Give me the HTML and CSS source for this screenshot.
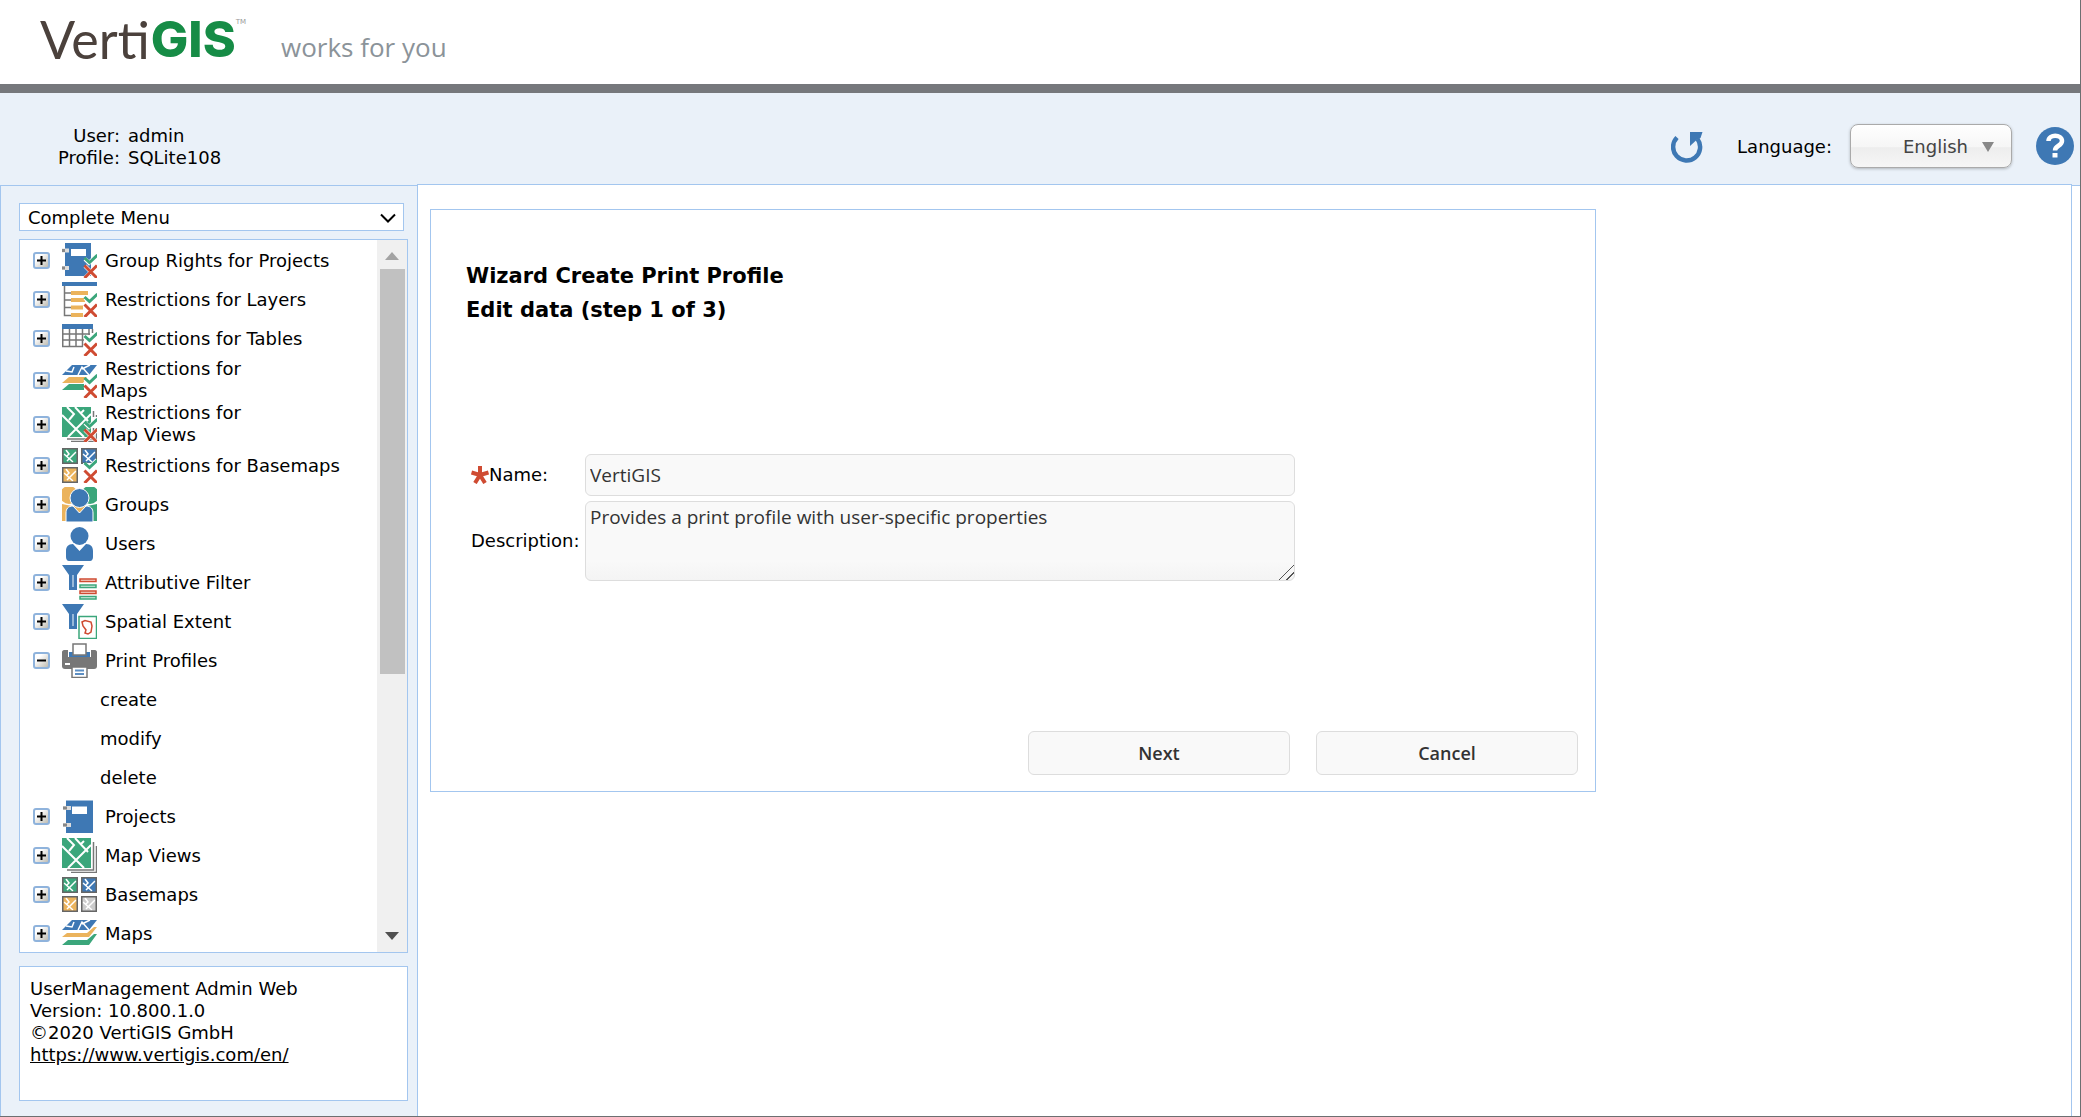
FILE: index.html
```html
<!DOCTYPE html>
<html lang="en">
<head>
<meta charset="utf-8">
<title>UserManagement Admin Web</title>
<link rel="stylesheet" href="styles.css">
</head>
<body>
<svg class="sprite" aria-hidden="true">
  <defs>
    <linearGradient id="boxfill" x1="0" y1="0" x2="1" y2="1"><stop offset="0.3" stop-color="#fff"/><stop offset="1" stop-color="#b9b6ab"/></linearGradient>
  </defs>
  <symbol id="box" viewBox="0 0 17 17"><rect x="1" y="1" width="15" height="15" rx="2" fill="url(#boxfill)" stroke="#8fb3dc" stroke-width="2"/></symbol>
  <symbol id="plus" viewBox="0 0 17 17"><use href="#box"/><path d="M4 8.500h9M8.500 4v9" stroke="#000" stroke-width="2"/></symbol>
  <symbol id="minus" viewBox="0 0 17 17"><use href="#box"/><path d="M4 8.500h9" stroke="#000" stroke-width="2"/></symbol>
  <symbol id="rights" viewBox="0 0 35 35">
    <path d="M23 16l4 4 8-8M23 23l12 12M35 23L23 35" fill="none" stroke="#fff" stroke-width="4"/>
    <path d="M22.500 15l5 4.500 8-7.500" fill="none" stroke="#3ba67b" stroke-width="3"/>
    <path d="M22.500 22.500l12.500 12.500M35 22.500l-12.500 12.500" fill="none" stroke="#cf4b32" stroke-width="3"/>
  </symbol>
  <symbol id="project" viewBox="0 0 35 35">
    <path d="M4 1.500h27V34H4z" fill="#3e78b4"/><path d="M10 7.500h15v7.500H10z" fill="#fff"/>
    <path d="M1 9h8M1 26h8" stroke="#ddd" stroke-width="4"/><path d="M1 9h4M1 26h4" stroke="#888" stroke-width="3"/>
  </symbol>
  <symbol id="project-rights" viewBox="0 0 35 35">
    <path d="M3 0h26v33H3z" fill="#3e78b4"/><path d="M9 6h15v7H9z" fill="#fff"/>
    <path d="M0 7.500h7M0 25h7" stroke="#ddd" stroke-width="4"/><path d="M0 7.500h3M0 25h3" stroke="#888" stroke-width="3"/>
    <use href="#rights"/>
  </symbol>
  <symbol id="layers" viewBox="0 0 35 35">
    <path d="M0 0h35v4H0z" fill="#3e78b4"/><path d="M2.500 4v29.500H9M2.500 11H9M2.500 18H9M2.500 25.500H9" fill="none" stroke="#777" stroke-width="1.500"/>
    <path d="M9 9h17v4H9zM9 16h14v4H9zM9 23.500h12v4H9zM9 31h12v4H9z" fill="#ebb35c"/><use href="#rights"/>
  </symbol>
  <symbol id="table" viewBox="0 0 35 35">
    <path d="M0 3h31v5H0z" fill="#3e78b4"/><path d="M.75 8v17.500M7.500 8v17.500M14 8v17.500M20.500 8v17.500M27 8v6M30.500 8v4M0 13h28M0 19h22M0 25.500h21" fill="none" stroke="#777" stroke-width="1.500"/>
    <use href="#rights"/>
  </symbol>
  <symbol id="maps" viewBox="0 0 35 35">
    <path d="M10 4h25L27 14H0z" fill="#3e78b4"/><path d="M4 10l6 1 2-5M16 14l4-8 7 8M20 8l8-4" fill="none" stroke="#fff" stroke-width="1.500"/>
    <path d="M0 21l5-4h20l7-6h3l-8 10z" fill="#ebb35c"/><path d="M0 29l6-5h19l7-6h3l-8 11z" fill="#3ba67b"/>
  </symbol>
  <symbol id="maps-rights" viewBox="0 0 35 35">
    <path d="M10 2h25l-8 10H0z" fill="#3e78b4"/><path d="M4 8l6 1 2-5M16 12l4-8 7 8M20 6l8-4" fill="none" stroke="#fff" stroke-width="1.500"/>
    <path d="M0 20l7-6h18l-4 6z" fill="#ebb35c"/><path d="M0 27l7-6h15v6z" fill="#3ba67b"/><use href="#rights"/>
  </symbol>
  <symbol id="mapview" viewBox="0 0 35 35">
    <path d="M0 0h29v30H0z" fill="#3ba67b"/><path d="M0 8l22 22M29 7L6 30M5 0l7 7-5 6M13 0l13 14M19 6l3-3" fill="none" stroke="#fff" stroke-width="2"/>
    <path d="M31.500 4v28H5M34.500 8v26.500H9" fill="none" stroke="#777" stroke-width="1.500"/>
  </symbol>
  <symbol id="mapview-rights" viewBox="0 0 35 35"><use href="#mapview"/><path d="M30 10h5v11h-5z" fill="#fff"/><use href="#rights"/></symbol>
  <symbol id="roads" viewBox="0 0 16 16"><path d="M2 6l9 8M14 4L5 13M4 2l3 4-2 2" fill="none" stroke="#fff" stroke-width="1.500"/><path d="M.75 .75h14.500v14.500H.75z" fill="none" stroke="#666" stroke-width="1.500"/></symbol>
  <symbol id="basemaps" viewBox="0 0 35 35">
    <path d="M0 0h16v16H0z" fill="#3ba67b"/><path d="M19 0h16v16H19z" fill="#3e78b4"/><path d="M0 19h16v16H0z" fill="#ebb35c"/><path d="M19 19h16v16H19z" fill="#ccc"/>
    <use href="#roads" width="16" height="16"/><use href="#roads" x="19" width="16" height="16"/><use href="#roads" y="19" width="16" height="16"/><use href="#roads" x="19" y="19" width="16" height="16"/>
  </symbol>
  <symbol id="basemaps-rights" viewBox="0 0 35 35"><use href="#basemaps"/><path d="M18 18h17v17H18zM21 15h14v3H21z" fill="#fff"/><use href="#rights"/></symbol>
  <symbol id="user" viewBox="0 0 35 35">
    <circle cx="17.500" cy="10" r="9" fill="#3e78b4"/><path d="M11 18l6.500 7 6.500-7c5 0 7 3 7 7v6c0 2-1 4-3 4H7c-2 0-3-2-3-4v-6c0-4 2-7 7-7z" fill="#3e78b4"/>
  </symbol>
  <symbol id="groups" viewBox="0 0 35 35">
    <circle cx="7" cy="8" r="9" fill="#ebb35c"/><path d="M0 17l10 2v15H0z" fill="#ebb35c"/>
    <circle cx="28" cy="8" r="9" fill="#3ba67b"/><path d="M35 17l-10 2v15h10z" fill="#3ba67b"/><path d="M12 18h11v7H12z" fill="#ebb35c"/>
    <circle cx="17.500" cy="11" r="9.500" fill="#3e78b4" stroke="#fff"/><path d="M11 19l6.500 7 6.500-7c5 0 7 3 7 7v9H4v-9c0-4 2-7 7-7z" fill="#3e78b4" stroke="#fff"/>
  </symbol>
  <symbol id="funnel" viewBox="0 0 35 35"><path d="M0 0h22l-7 10v15H7V10z" fill="#3e78b4"/><path d="M11 10v12" stroke="#b7cfe6" stroke-width="1.500"/></symbol>
  <symbol id="attribute" viewBox="0 0 35 35"><use href="#funnel"/>
    <path d="M18 14h16v2.500H18zM18 26h16v2.500H18z" fill="#f6dcd6" stroke="#cf4b32" stroke-width="1.500"/><path d="M18 20h16v2.500H18zM18 31.500h16V34H18z" fill="#d8eee5" stroke="#3ba67b" stroke-width="1.500"/>
  </symbol>
  <symbol id="extent" viewBox="0 0 35 35"><use href="#funnel"/>
    <path d="M17 12.500h17.500v22H17z" fill="#fff" stroke="#3ba67b" stroke-width="1.500"/><path d="M20 18l3-1.500 6 1.500 1 4-1 6-3 2-3-1 1-3-3-4z" fill="none" stroke="#cf4b32" stroke-width="1.500"/>
  </symbol>
  <symbol id="printer" viewBox="0 0 35 35">
    <path d="M2 7h31c1 0 2 1 2 2v14c0 2-1 3-3 3H3c-2 0-3-1-3-3V9c0-1 1-2 2-2z" fill="#777"/><path d="M6 6h23v8H6z" fill="#fff"/>
    <path d="M7 9h21v5H7z" fill="#3e78b4"/><path d="M11 1h13v11H11zM10 24h15v10.500H10z" fill="#fff" stroke="#777" stroke-width="1.500"/><path d="M3 21h5" stroke="#fff" stroke-width="2"/><path d="M13 27.500h9M13 31h9" stroke="#5d8fc3" stroke-width="2"/>
  </symbol>
</svg>

<header class="brand">
  <div class="logo"><span class="logo-light">Verti</span><span class="logo-bold">GIS</span><sup class="logo-tm">TM</sup></div>
  <p class="slogan">works for you</p>
</header>

<div class="toolbar">
  <dl class="session">
    <dt>User:</dt><dd>admin</dd>
    <dt>Profile:</dt><dd>SQLite108</dd>
  </dl>
  <div class="tools">
    <button class="icon-button" type="button" aria-label="Reload">
      <svg width="32" height="34" viewBox="0 0 32 34"><path d="M6 8.500A13.500 13.500 0 1 0 26.500 10" fill="none" stroke="#3e78b4" stroke-width="4.500"/><path d="M19 3h12.500l-2 6-4 2-6.500 6z" fill="#3e78b4"/></svg>
    </button>
    <label class="language-label" for="language">Language:</label>
    <div class="language">
      <select id="language"><option>English</option></select>
      <svg class="language-arrow" width="12" height="10" viewBox="0 0 12 10"><path d="M0 0h12L6 10z" fill="#888"/></svg>
    </div>
    <button class="icon-button" type="button" aria-label="Help">
      <svg width="38" height="38" viewBox="0 0 38 38"><circle cx="19" cy="19" r="19" fill="#3e78b4"/><path d="M12.500 14c0-7 13.500-7 13.500 0 0 5-7 4.500-7 9.500" fill="none" stroke="#fff" stroke-width="4.500"/><path d="M16.500 26h5v4.500h-5z" fill="#fff"/></svg>
    </button>
  </div>
</div>

<div class="workspace">
  <aside class="sidebar">
    <div class="menu-select">
      <select aria-label="Menu"><option>Complete Menu</option></select>
      <svg class="menu-arrow" width="16" height="10" viewBox="0 0 16 10"><path d="M1 1.500l7 7 7-7" fill="none" stroke="#000" stroke-width="2"/></svg>
    </div>
    <nav class="tree">
      <ul class="tree-list">
        <li><button class="toggle" type="button" aria-label="Expand"><svg><use href="#plus"/></svg></button><svg class="icon"><use href="#project-rights"/></svg><a href="#">Group Rights for Projects</a></li>
        <li><button class="toggle" type="button" aria-label="Expand"><svg><use href="#plus"/></svg></button><svg class="icon"><use href="#layers"/></svg><a href="#">Restrictions for Layers</a></li>
        <li><button class="toggle" type="button" aria-label="Expand"><svg><use href="#plus"/></svg></button><svg class="icon"><use href="#table"/></svg><a href="#">Restrictions for Tables</a></li>
        <li><button class="toggle" type="button" aria-label="Expand"><svg><use href="#plus"/></svg></button><svg class="icon"><use href="#maps-rights"/></svg><a href="#">Restrictions for<br>Maps</a></li>
        <li><button class="toggle" type="button" aria-label="Expand"><svg><use href="#plus"/></svg></button><svg class="icon"><use href="#mapview-rights"/></svg><a href="#">Restrictions for<br>Map Views</a></li>
        <li><button class="toggle" type="button" aria-label="Expand"><svg><use href="#plus"/></svg></button><svg class="icon"><use href="#basemaps-rights"/></svg><a href="#">Restrictions for Basemaps</a></li>
        <li><button class="toggle" type="button" aria-label="Expand"><svg><use href="#plus"/></svg></button><svg class="icon"><use href="#groups"/></svg><a href="#">Groups</a></li>
        <li><button class="toggle" type="button" aria-label="Expand"><svg><use href="#plus"/></svg></button><svg class="icon"><use href="#user"/></svg><a href="#">Users</a></li>
        <li><button class="toggle" type="button" aria-label="Expand"><svg><use href="#plus"/></svg></button><svg class="icon"><use href="#attribute"/></svg><a href="#">Attributive Filter</a></li>
        <li><button class="toggle" type="button" aria-label="Expand"><svg><use href="#plus"/></svg></button><svg class="icon"><use href="#extent"/></svg><a href="#">Spatial Extent</a></li>
        <li><button class="toggle" type="button" aria-label="Collapse"><svg><use href="#minus"/></svg></button><svg class="icon"><use href="#printer"/></svg><a href="#">Print Profiles</a></li>
        <li class="child"><a href="#">create</a></li>
        <li class="child"><a href="#">modify</a></li>
        <li class="child"><a href="#">delete</a></li>
        <li><button class="toggle" type="button" aria-label="Expand"><svg><use href="#plus"/></svg></button><svg class="icon"><use href="#project"/></svg><a href="#">Projects</a></li>
        <li><button class="toggle" type="button" aria-label="Expand"><svg><use href="#plus"/></svg></button><svg class="icon"><use href="#mapview"/></svg><a href="#">Map Views</a></li>
        <li><button class="toggle" type="button" aria-label="Expand"><svg><use href="#plus"/></svg></button><svg class="icon"><use href="#basemaps"/></svg><a href="#">Basemaps</a></li>
        <li><button class="toggle" type="button" aria-label="Expand"><svg><use href="#plus"/></svg></button><svg class="icon"><use href="#maps"/></svg><a href="#">Maps</a></li>
      </ul>
      <div class="scrollbar" aria-hidden="true">
        <svg width="14" height="8" viewBox="0 0 14 8"><path d="M0 8l7-8 7 8z" fill="#a3a3a3"/></svg>
        <div class="track"><div class="thumb"></div></div>
        <svg width="14" height="8" viewBox="0 0 14 8"><path d="M0 0l7 8 7-8z" fill="#505050"/></svg>
      </div>
    </nav>
    <div class="about">
      UserManagement Admin Web<br>Version: 10.800.1.0<br>©2020 VertiGIS GmbH<br><a href="https://www.vertigis.com/en/">https://www.vertigis.com/en/</a>
    </div>
  </aside>
  <main class="content">
    <form class="wizard">
      <h1>Wizard Create Print Profile</h1>
      <h2>Edit data (step 1 of 3)</h2>
      <div class="fields">
        <label for="name"><svg width="18" height="18" viewBox="0 0 18 18"><path d="M9 9V0M9 9L.5 6.500M9 9l8.500-2.500M9 9l-5 8M9 9l5 8" stroke="#cf4b32" stroke-width="4"/></svg>Name:</label>
        <input id="name" type="text" value="VertiGIS">
        <label for="description">Description:</label>
        <textarea id="description">Provides a print profile with user-specific properties</textarea>
      </div>
      <div class="actions">
        <button type="button">Next</button>
        <button type="button">Cancel</button>
      </div>
    </form>
  </main>
</div>
</body>
</html>
```
FILE: styles.css
```css
* { box-sizing: border-box; }

body {
  margin: 0;
  height: 100vh;
  display: flex;
  flex-direction: column;
  border-right: 1px solid #6d6f71;
  border-bottom: 1px solid #6d6f71;
  background: #fff;
  color: #000;
  font: 18px/22px "DejaVu Sans", Verdana, sans-serif;
}

.sprite { position: absolute; width: 0; height: 0; }

button, select, input, textarea { font: inherit; color: inherit; }

a { color: inherit; text-decoration: none; }

/* Brand header */
.brand {
  flex: none;
  display: flex;
  height: 93px;
  padding-left: 40px;
  border-bottom: 9px solid #76787c;
}

.logo {
  display: flex;
  width: 241px;
  height: 80px;
  line-height: 78px;
  font-size: 52px;
  color: #4b413c;
}

.logo-light { font-family: Lato, sans-serif; font-weight: 400; }
.logo-bold { margin-left: 1px; font-family: Inter, sans-serif; font-size: 50px; font-weight: 800; color: #168c46; }
.logo-tm { margin: 0; font-size: 7px; line-height: 44px; color: #999; }

.slogan {
  margin: 0;
  line-height: 94px;
  font-family: "Open Sans", sans-serif;
  font-size: 26px;
  color: #8b9399;
}

/* Session and tools */
.toolbar {
  flex: none;
  display: flex;
  justify-content: space-between;
  height: 92px;
  padding-right: 6px;
  background: #eaf1f9;
}

.session {
  display: grid;
  grid-template-columns: 120px auto;
  column-gap: 8px;
  align-content: start;
  margin: 32px 0 0;
}

.session dt { text-align: right; }
.session dd { margin: 0; }

.tools { display: flex; align-items: center; height: 106px; }

.icon-button { display: flex; padding: 0; border: 0; background: none; }

.language-label { margin: 2px 18px 0 34px; }

.language { position: relative; margin-right: 24px; }

.language select {
  appearance: none;
  display: block;
  width: 162px;
  height: 44px;
  padding: 2px 8px 0 52px;
  border: 1px solid #aaa;
  border-radius: 8px;
  background: linear-gradient(#fff, #f6f6f6 52%, #ededed 54%, #f6f6f6);
  box-shadow: 0 1px 3px rgba(0, 0, 0, 0.25);
  color: #444;
}

.language-arrow { position: absolute; right: 18px; top: 18px; pointer-events: none; }

/* Workspace */
.workspace { flex: 1; min-height: 0; display: flex; background: #fff; border-top: 1px solid #a3c6ef; }

.sidebar {
  flex: none;
  display: flex;
  flex-direction: column;
  width: 418px;
  padding: 17px 9px 15px 18px;
  border: 1px solid #a3c6ef;
  border-width: 0 1px;
  background: #eaf1f9;
}

.menu-select { position: relative; margin: 0 4px 8px 0; }

.menu-select select {
  appearance: none;
  display: block;
  width: 100%;
  height: 28px;
  padding: 1px 8px 0;
  border: 1px solid #a3c6ef;
  border-radius: 0;
  background: #fff;
}

.menu-arrow { position: absolute; right: 8px; top: 10px; pointer-events: none; }

.tree {
  flex: 1;
  min-height: 0;
  display: flex;
  overflow: hidden;
  border: 1px solid #a3c6ef;
  background: #fff;
}

.tree-list { flex: 1; margin: 0; padding: 1px 0 0 13px; list-style: none; }

.tree-list li { display: flex; align-items: center; min-height: 39px; }

.tree-list a { padding-left: 3px; text-indent: 5px; }

.tree-list .child { padding-left: 67px; }
.tree-list .child a { padding: 0; text-indent: 0; }

.toggle {
  display: flex;
  width: 17px;
  height: 17px;
  margin-right: 12px;
  padding: 0;
  border: 0;
  background: none;
}

.toggle svg { width: 17px; height: 17px; }

.icon { flex: none; width: 35px; height: 35px; }

.scrollbar {
  flex: none;
  display: flex;
  flex-direction: column;
  align-items: center;
  width: 30px;
  padding: 12px 0;
  background: #f0f0f0;
}

.track { flex: 1; width: 25px; margin: 9px 0; }
.thumb { height: 62%; background: #c1c1c1; }

.about {
  flex: none;
  min-height: 135px;
  margin-top: 13px;
  padding: 11px 10px;
  border: 1px solid #a3c6ef;
  background: #fff;
}

.about a { text-decoration: underline; }

.content {
  flex: 1;
  margin: -2px 8px 0 -1px;
  padding: 24px 12px;
  border: 1px solid #a3c6ef;
  border-bottom: 0;
  background: #fff;
}

/* Wizard */
.wizard {
  max-width: 1166px;
  padding: 49px 17px 16px 35px;
  border: 1px solid #a3c6ef;
}

.wizard h1, .wizard h2 { margin: 0; font-size: 21px; line-height: 34px; }

.fields {
  display: grid;
  grid-template-columns: 114px minmax(0, 710px);
  align-items: center;
  row-gap: 5px;
  margin: 127px 0 150px 5px;
}

.fields label { display: flex; align-items: center; white-space: nowrap; }

.fields input, .fields textarea {
  display: block;
  width: 100%;
  height: 42px;
  padding: 0 4px;
  border: 1px solid #ddd;
  border-radius: 6px;
  background: #f9f9f9;
  font-family: "Open Sans", sans-serif;
  font-size: 19px;
  color: #333;
}

.fields textarea {
  height: 80px;
  padding: 3px 4px;
  line-height: 24px;
  background: linear-gradient(#f9f9f9 75%, #f4f4f4);
}

.fields textarea::-webkit-resizer {
  background: linear-gradient(135deg, transparent 48%, #555 48% 53%, transparent 53% 73%, #555 73% 78%, transparent 78%);
}

.actions { display: flex; justify-content: flex-end; gap: 26px; }

.actions button {
  width: 262px;
  height: 44px;
  padding: 0;
  border: 1px solid #ddd;
  border-radius: 6px;
  background: #f9f9f9;
  font-family: "Open Sans", sans-serif;
  font-weight: 600;
  color: #333;
}
```
